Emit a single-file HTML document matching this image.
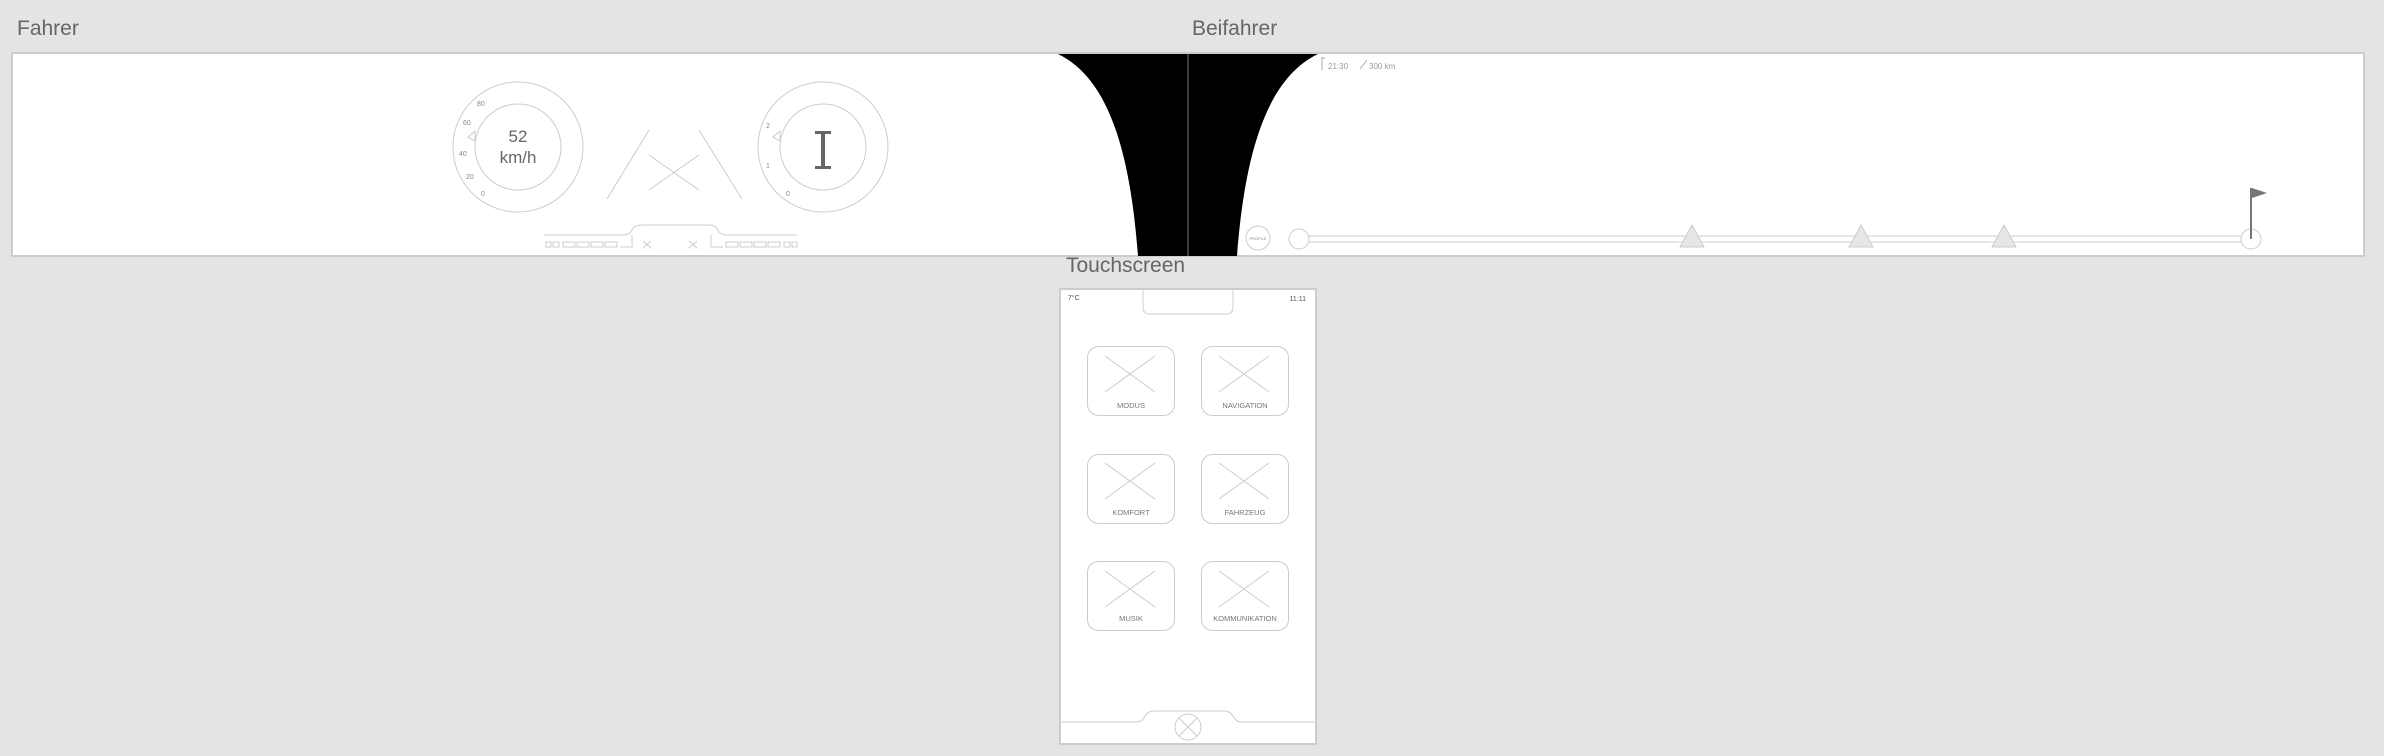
<!DOCTYPE html>
<html><head><meta charset="utf-8"><style>
html,body{margin:0;padding:0;background:#e4e4e4;width:2384px;height:756px;overflow:hidden}
svg{position:absolute;left:0;top:0}
text{font-family:"Liberation Sans",sans-serif}
</style></head><body>
<svg width="2384" height="756" viewBox="0 0 2384 756">
<text x="17" y="35" font-size="21" fill="#666">Fahrer</text>
<text x="1192" y="35" font-size="21" fill="#666">Beifahrer</text>
<text x="1066" y="272" font-size="21" fill="#666">Touchscreen</text>
<rect x="12" y="53" width="2352" height="203" fill="#fff" stroke="#ccc" stroke-width="2"/>
<g fill="none" stroke="#ccc" stroke-width="1">
<circle cx="518" cy="147" r="65"/><circle cx="518" cy="147" r="43"/>
<circle cx="823" cy="147" r="65"/><circle cx="823" cy="147" r="43"/>
<path d="M475,131 L468,137 L475,141 Z"/>
<path d="M780,131 L773,137 L780,141 Z"/>
<line x1="649" y1="130" x2="607" y2="199"/><line x1="699" y1="130" x2="742" y2="199"/>
<line x1="649" y1="155" x2="699" y2="190"/><line x1="699" y1="155" x2="649" y2="190"/>
<path d="M544,235 L622,235 Q630,235 632,230 Q634,225 642,225 L708,225 Q716,225 718,230 Q720,235 728,235 L797,235"/>
<path d="M546,242h5v5h-5zM553,242h6v5h-6zM563,242h12v5h-12zM577,242h12v5h-12zM591,242h12v5h-12zM605,242h12v5h-12zM620,247h12v-12"/>
<path d="M797,242h-5v5h5zM790,242h-6v5h6zM780,242h-12v5h12zM766,242h-12v5h12zM752,242h-12v5h12zM738,242h-12v5h12zM723,247h-12v-12"/>
<path d="M643,241l8,7M651,241l-8,7M689,241l8,7M697,241l-8,7"/>
</g>
<g font-size="7" fill="#888">
<text x="477" y="106">80</text><text x="463" y="125">60</text><text x="459" y="156">40</text><text x="466" y="179">20</text><text x="481" y="196">0</text>
<text x="766" y="128">2</text><text x="766" y="168">1</text><text x="786" y="196">0</text>
</g>
<text x="518" y="142" font-size="17" fill="#666" text-anchor="middle">52</text>
<text x="518" y="163" font-size="17" fill="#666" text-anchor="middle">km/h</text>
<path d="M815,131h16v3h-6v32h6v3h-16v-3h6v-32h-6z" fill="#666"/>
<path d="M1058,54 C1108,78 1130,150 1138,256 L1237,256 C1245,150 1268,78 1318,54 Z" fill="#000"/>
<line x1="1188" y1="54" x2="1188" y2="256" stroke="#777" stroke-width="1"/>
<path d="M1322,57v13M1322,57l3,2" stroke="#aaa" fill="none"/>
<text x="1328" y="69" font-size="8" fill="#999">21:30</text>
<path d="M1360,69l7,-9" stroke="#aaa"/>
<text x="1369" y="69" font-size="8" fill="#999">300 km</text>
<circle cx="1258" cy="238" r="12" fill="#fff" stroke="#ccc"/>
<text x="1258" y="240" font-size="4" fill="#888" text-anchor="middle">PROFILE</text>
<g stroke="#ccc" fill="none">
<line x1="1309" y1="236" x2="2244" y2="236"/><line x1="1309" y1="242" x2="2244" y2="242"/>
<circle cx="1299" cy="239" r="10" fill="#fff"/>
<circle cx="2251" cy="239" r="10" fill="#fff"/>
</g>
<g fill="#e6e6e6" stroke="#ccc">
<path d="M1692,225l12,22h-24z"/><path d="M1861,225l12,22h-24z"/><path d="M2004,225l12,22h-24z"/>
</g>
<line x1="2251" y1="188" x2="2251" y2="239" stroke="#777" stroke-width="2"/>
<path d="M2252,188l15,5l-15,5z" fill="#777"/>
<rect x="1060" y="289" width="256" height="455" fill="#fff" stroke="#ccc" stroke-width="2"/>
<path d="M1143,290 v17 q0,7 7,7 h76 q7,0 7,-7 v-17" fill="none" stroke="#ccc"/>
<text x="1068" y="300" font-size="7" fill="#555">7°C</text>
<text x="1306" y="301" font-size="7" fill="#555" text-anchor="end">11:11</text>
<g fill="none" stroke="#ccc">
<rect x="1087.5" y="346.5" width="87" height="69" rx="11"/><rect x="1201.5" y="346.5" width="87" height="69" rx="11"/>
<rect x="1087.5" y="454.5" width="87" height="69" rx="11"/><rect x="1201.5" y="454.5" width="87" height="69" rx="11"/>
<rect x="1087.5" y="561.5" width="87" height="69" rx="11"/><rect x="1201.5" y="561.5" width="87" height="69" rx="11"/>
<path d="M1105,356l50,36M1155,356l-50,36M1219,356l50,36M1269,356l-50,36"/>
<path d="M1105,463l50,36M1155,463l-50,36M1219,463l50,36M1269,463l-50,36"/>
<path d="M1105,571l50,36M1155,571l-50,36M1219,571l50,36M1269,571l-50,36"/>
<path d="M1061,722 h76 q5,0 8,-6 q3,-5 9,-5 h70 q6,0 9,5 q3,6 8,6 h75"/>
<circle cx="1188" cy="727" r="13"/>
<path d="M1179,718l18,18M1197,718l-18,18"/>
</g>
<g font-size="7.5" fill="#777" text-anchor="middle">
<text x="1131" y="408">MODUS</text><text x="1245" y="408">NAVIGATION</text>
<text x="1131" y="515">KOMFORT</text><text x="1245" y="515">FAHRZEUG</text>
<text x="1131" y="621">MUSIK</text><text x="1245" y="621">KOMMUNIKATION</text>
</g>
</svg>
</body></html>
